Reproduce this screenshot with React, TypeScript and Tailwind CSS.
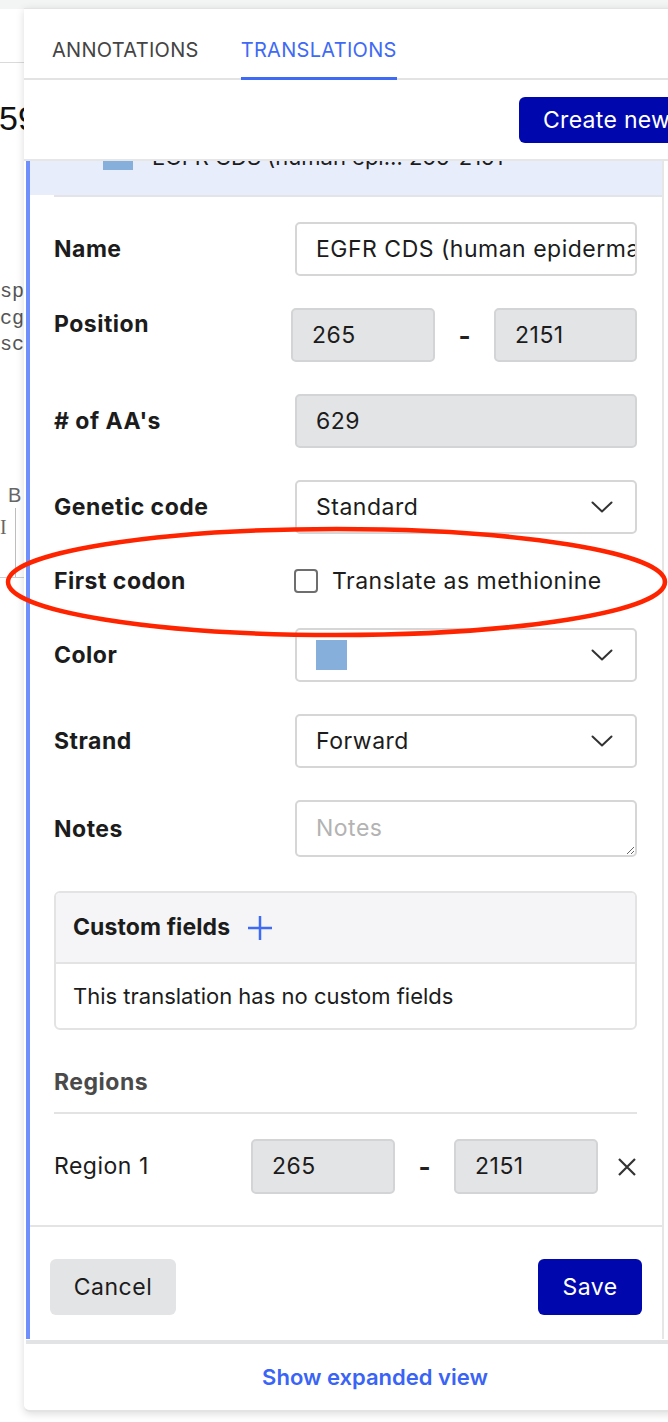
import React from "react";

const FONT = "font-['Inter','Liberation_Sans',sans-serif]";

function Chevron() {
  return (
    <svg width="22" height="12" viewBox="0 0 22 12" className="shrink-0">
      <path d="M1.5 1.5 L11 10.5 L20.5 1.5" stroke="#333" strokeWidth="2" fill="none" strokeLinecap="round" strokeLinejoin="round" />
    </svg>
  );
}

function Label({ children }: { children: React.ReactNode }) {
  return <div className="w-[241px] shrink-0 text-[23px] tracking-[0.5px] font-bold leading-[28px] text-[#1c1c1c]">{children}</div>;
}

function GrayBox({ children, className = "" }: { children: React.ReactNode; className?: string }) {
  return (
    <div className={`h-[54px] rounded-[5px] border-2 border-[#d3d4d6] bg-[#e3e4e6] flex items-center pl-[19px] text-[23px] tracking-[0.5px] text-[#1c1c1c] ${className}`}>
      {children}
    </div>
  );
}

function WhiteBox({ children, className = "" }: { children: React.ReactNode; className?: string }) {
  return (
    <div className={`h-[54px] rounded-[5px] border-2 border-[#d6d6d6] bg-white flex items-center pl-[19px] pr-[22px] text-[23px] tracking-[0.5px] text-[#1c1c1c] overflow-hidden ${className}`}>
      {children}
    </div>
  );
}

export default function App() {
  return (
    <div className={`relative w-[668px] h-[1422px] overflow-hidden bg-white flex ${FONT}`}>
      {/* background page fragment on the left */}
      <div className="w-[24px] shrink-0 flex flex-col overflow-hidden bg-white">
        <div className="h-[9px] bg-[#f3f4f4]" />
        <div className="h-[53px]" />
        <div className="h-px bg-[#dadada]" />
        <div className="h-[35px]" />
        <div className="h-[40px] leading-[40px] text-[34px] text-[#111] whitespace-nowrap font-['Liberation_Sans',sans-serif] -ml-[1px]">59</div>
        <div className="h-[141px]" />
        <div className="font-['Liberation_Mono',monospace] text-[20px] leading-[26.5px] text-[#555] whitespace-nowrap">
          <div>sp/</div>
          <div>cg]</div>
          <div>sc]</div>
        </div>
        <div className="h-[124px]" />
        <div className="h-[25px] leading-[25px] text-[20px] text-[#666] pl-[8px] font-['Liberation_Sans',sans-serif]">B</div>
        <div className="h-[69px] flex">
          <div className="w-[16px] border-r border-[#bdbdbd] font-['Liberation_Serif',serif] text-[20px] text-[#666] leading-[20px] pt-[9px]">I</div>
        </div>
        <div className="h-px bg-[#cfcfcf]" />
      </div>

      {/* floating panel */}
      <div className="w-[700px] shrink-0 flex flex-col">
        <div className="h-[8px] bg-[#f3f4f4]" />
        <div className="h-[1404px] bg-white border-t border-b-2 border-[#e3e3e3] rounded-bl-[6px] shadow-[0_2px_8px_rgba(0,0,0,0.14)] flex flex-col overflow-hidden">
          {/* tabs */}
          <div className="h-[71px] shrink-0 border-b-2 border-[#e3e3e3] flex items-stretch pl-[28px] gap-[42px] text-[20px] tracking-[0.3px]">
            <div className="flex items-center text-[#444] pt-[13px]">ANNOTATIONS</div>
            <div className="flex items-center text-[#3f6af5] border-b-[3px] border-[#3f6af5] -mb-[2px] pt-[13px]">TRANSLATIONS</div>
          </div>
          {/* header with button */}
          <div className="h-[81px] shrink-0 border-b-2 border-[#e6e6e6] pl-[495px] pt-[17px]">
            <div className="h-[46px] w-[200px] rounded-[6px] bg-[#0008ad] text-white text-[23px] tracking-[0.3px] flex items-center pl-[24px] whitespace-nowrap">
              Create new
            </div>
          </div>
          {/* scroll area */}
          <div className="h-[1179px] shrink-0 overflow-hidden">
            <div className="ml-[2px] w-[638px] border-l-4 border-[#6e8ffc] border-r-2 border-r-[#e6e6e6] flex flex-col">
              {/* clipped list item */}
              <div className="h-[34px] bg-[#e8edfc] overflow-hidden">
                <div className="-mt-[21px] h-[30px] flex items-end pl-[73px]">
                  <div className="w-[30px] h-[18px] bg-[#86afdb] shrink-0" />
                  <div className="ml-[19px] mb-[3px] text-[22px] leading-[20px] text-[#1c1c1c] whitespace-nowrap">EGFR CDS (human epi… 265-2151</div>
                </div>
              </div>
              {/* form */}
              <div className="ml-[24px] border-t-2 border-[#e2e4ea]">
                <div className="pr-[25px] pt-[25px] pb-[31px] flex flex-col">
                  <div className="flex items-center">
                    <Label>Name</Label>
                    <WhiteBox className="flex-1 whitespace-nowrap">EGFR CDS (human epidermal growth factor receptor)</WhiteBox>
                  </div>
                  <div className="flex items-start mt-[32px]">
                    <div className="w-[237px] shrink-0 pt-[2px] text-[23px] tracking-[0.5px] font-bold leading-[28px] text-[#1c1c1c]">Position</div>
                    <GrayBox className="w-[144px]">265</GrayBox>
                    <div className="w-[59px] h-[54px] flex items-center justify-center text-[26px] font-bold text-[#222]">-</div>
                    <GrayBox className="w-[143px]">2151</GrayBox>
                  </div>
                  <div className="flex items-center mt-[32px]">
                    <Label># of AA's</Label>
                    <GrayBox className="flex-1">629</GrayBox>
                  </div>
                  <div className="flex items-center mt-[32px]">
                    <Label>Genetic code</Label>
                    <WhiteBox className="flex-1 justify-between">
                      <span>Standard</span>
                      <Chevron />
                    </WhiteBox>
                  </div>
                  <div className="flex items-center mt-[32px] h-[30px]">
                    <Label>First codon</Label>
                    <div className="w-[24px] h-[24px] rounded-[4px] border-2 border-[#6e6e6e] bg-white shrink-0 -ml-[1px]" />
                    <div className="ml-[14px] text-[23px] tracking-[0.5px] text-[#1c1c1c]">Translate as methionine</div>
                  </div>
                  <div className="flex items-center mt-[32px]">
                    <Label>Color</Label>
                    <WhiteBox className="flex-1 justify-between">
                      <div className="w-[31px] h-[30px] bg-[#86afdb]" />
                      <Chevron />
                    </WhiteBox>
                  </div>
                  <div className="flex items-center mt-[32px]">
                    <Label>Strand</Label>
                    <WhiteBox className="flex-1 justify-between">
                      <span>Forward</span>
                      <Chevron />
                    </WhiteBox>
                  </div>
                  <div className="flex items-center mt-[32px]">
                    <Label>Notes</Label>
                    <textarea
                      placeholder="Notes"
                      className="flex-1 h-[57px] rounded-[5px] border-2 border-[#d6d6d6] bg-white px-[19px] pt-[12px] text-[23px] tracking-[0.5px] leading-[28px] text-[#1c1c1c] placeholder:text-[#b3b3b3] outline-none"
                    />
                  </div>
                  {/* custom fields */}
                  <div className="mt-[34px] rounded-[6px] border-2 border-[#e3e3e3] overflow-hidden">
                    <div className="h-[71px] bg-[#f5f5f7] border-b-2 border-[#e3e3e3] flex items-center pl-[17px]">
                      <span className="text-[23px] tracking-[0.1px] font-bold text-[#1c1c1c]">Custom fields</span>
                      <svg width="26" height="26" viewBox="0 0 26 26" className="ml-[17px]">
                        <path d="M13 1 V25 M1 13 H25" stroke="#3f6af5" strokeWidth="2.5" fill="none" />
                      </svg>
                    </div>
                    <div className="h-[64px] flex items-center pl-[17px] text-[22px] text-[#1c1c1c]">
                      This translation has no custom fields
                    </div>
                  </div>
                  {/* regions */}
                  <div className="mt-[38px] text-[23px] tracking-[0.5px] font-bold leading-[28px] text-[#4a4a4a]">Regions</div>
                  <div className="mt-[16px] h-[2px] bg-[#e3e3e3]" />
                  <div className="mt-[25px] flex items-center">
                    <div className="w-[197px] shrink-0 text-[23px] tracking-[0.5px] text-[#1c1c1c]">Region 1</div>
                    <GrayBox className="w-[144px] !h-[55px]">265</GrayBox>
                    <div className="w-[59px] h-[55px] flex items-center justify-center text-[26px] font-bold text-[#222]">-</div>
                    <GrayBox className="w-[144px] !h-[55px]">2151</GrayBox>
                    <div className="flex-1 flex justify-end">
                      <svg width="20" height="20" viewBox="0 0 20 20">
                        <path d="M2 2 L18 18 M18 2 L2 18" stroke="#333" strokeWidth="2.2" fill="none" />
                      </svg>
                    </div>
                  </div>
                </div>
              </div>
              {/* actions */}
              <div className="border-t-2 border-[#e4e4e4] px-[20px] pt-[32px] pb-[24px] flex justify-between">
                <div className="h-[56px] w-[126px] rounded-[6px] bg-[#e3e4e6] flex items-center justify-center text-[23px] tracking-[0.5px] text-[#1c1c1c]">Cancel</div>
                <div className="h-[56px] w-[104px] rounded-[6px] bg-[#0008ad] flex items-center justify-center text-[23px] tracking-[0.5px] text-white">Save</div>
              </div>
            </div>
          </div>
          {/* footer */}
          <div className="ml-[2px] border-t-4 border-[#e2e3e5] flex-1 flex items-center justify-center">
            <span className="text-[22px] font-semibold text-[#3a64f5]">Show expanded view</span>
          </div>
        </div>
      </div>

      {/* red annotation ellipse */}
      <svg className="absolute left-0 top-0 pointer-events-none" width="668" height="1422" viewBox="0 0 668 1422">
        <ellipse cx="336.5" cy="582" rx="328.5" ry="53" stroke="#ff2400" strokeWidth="4.5" fill="none" />
      </svg>
    </div>
  );
}
